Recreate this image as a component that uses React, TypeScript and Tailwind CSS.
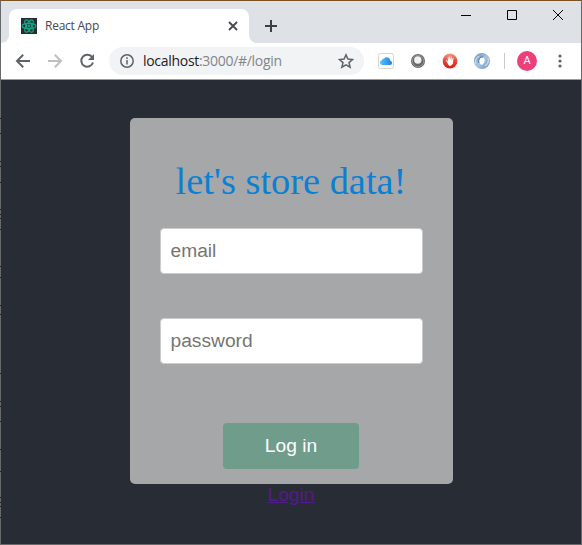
import type { ReactNode } from "react";

function TabStrip() {
  return (
    <header className="flex h-[42px] shrink-0 bg-[#dee1e6]">
      <div className="flex w-2 items-end bg-white">
        <div className="h-full w-2 rounded-br-lg bg-[#dee1e6]" />
      </div>
      <div className="mt-2 flex w-60 items-center rounded-t-lg bg-white pl-3 pr-[9px]">
        <svg className="h-4 w-4" viewBox="0 0 16 16" fill="none" stroke="#12a583" strokeWidth="1.2">
          <rect width="16" height="16" fill="#282c34" stroke="none" />
          <ellipse cx="8" cy="8" rx="6.8" ry="2.7" />
          <ellipse cx="8" cy="8" rx="6.8" ry="2.7" transform="rotate(60 8 8)" />
          <ellipse cx="8" cy="8" rx="6.8" ry="2.7" transform="rotate(120 8 8)" />
          <circle cx="8" cy="8" r="1.4" fill="#12a583" stroke="none" />
        </svg>
        <span className="ml-2 grow text-xs tracking-[-0.25px] text-[#45494d]">React App</span>
        <svg className="h-3.5 w-3.5" viewBox="0 0 14 14" stroke="#45494d" strokeWidth="1.8">
          <path d="M3 3l8 8M11 3l-8 8" />
        </svg>
      </div>
      <div className="w-2 bg-white">
        <div className="h-full w-2 rounded-bl-lg bg-[#dee1e6]" />
      </div>
      <svg className="ml-[7px] mt-[18px] h-3.5 w-3.5" viewBox="0 0 14 14" stroke="#3c4043" strokeWidth="2">
        <path d="M7 1v12M1 7h12" />
      </svg>
      <div className="ml-auto flex gap-9 pr-[18px] pt-[9px]">
        <svg className="h-2.5 w-2.5" viewBox="0 0 10 10" stroke="#000">
          <path d="M0 5.5h10" />
        </svg>
        <svg className="h-2.5 w-2.5" viewBox="0 0 10 10" fill="none" stroke="#000">
          <path d="M.5.5h9v9h-9z" />
        </svg>
        <svg className="h-2.5 w-2.5" viewBox="0 0 10 10" stroke="#000">
          <path d="M0 0l10 10M10 0L0 10" />
        </svg>
      </div>
    </header>
  );
}

function Toolbar() {
  return (
    <nav className="flex h-9 shrink-0 items-center bg-white pl-3.5">
      <svg className="h-4 w-4" viewBox="0 0 16 16" fill="none" stroke="#5f6368" strokeWidth="2">
        <path d="M15 8H2.5M8.2 1.7L2 8l6.2 6.3" />
      </svg>
      <svg className="ml-4 h-4 w-4" viewBox="0 0 16 16" fill="none" stroke="#bdbfc1" strokeWidth="2">
        <path d="M1 8h12.5M7.8 1.7L14 8l-6.2 6.3" />
      </svg>
      <svg className="ml-4 h-4 w-4" viewBox="0 0 16 16" fill="none" stroke="#5f6368" strokeWidth="2">
        <path d="M13.2 4.2A6 6 0 1 0 14 9.5" />
        <path d="M15 1v6H9z" fill="#5f6368" stroke="none" />
      </svg>
      <div className="ml-3.5 flex h-7 w-[255px] items-center rounded-full bg-[#f1f3f4] pl-2.5 pr-2.5">
        <svg className="h-4 w-4" viewBox="0 0 16 16" fill="none" stroke="#5f6368" strokeWidth="1.5">
          <circle cx="8" cy="8" r="6.2" />
          <path d="M8 7v4.5M8 4.3v1.7" />
        </svg>
        <span className="ml-2 grow text-sm tracking-[-0.3px] text-[#80868b]">
          <span className="text-[#202124]">localhost</span>:3000/#/login
        </span>
        <svg className="h-4 w-4" viewBox="0 0 16 16" fill="none" stroke="#5f6368" strokeWidth="1.5">
          <path d="M8 1.8l1.9 4.3 4.6.4-3.5 3.1 1.1 4.6L8 11.8l-4.1 2.4L5 9.6 1.5 6.5l4.6-.4z" />
        </svg>
      </div>
      <div className="ml-3.5 flex gap-4">
        <svg className="h-4 w-4" viewBox="0 0 16 16">
          <defs>
            <linearGradient id="cloud" x1="0" x2="1">
              <stop stopColor="#54c5fb" />
              <stop offset="1" stopColor="#247de8" />
            </linearGradient>
          </defs>
          <rect x=".5" y=".5" width="15" height="15" rx="2" fill="#fff" stroke="#d4d4d4" />
          <path d="M4 12a2.4 2.4 0 0 1-.2-4.7A2 2 0 0 1 6 5.7a3.6 3.6 0 0 1 6.4 2A2.2 2.2 0 0 1 12.2 12z" fill="url(#cloud)" />
        </svg>
        <svg className="h-4 w-4" viewBox="0 0 16 16">
          <circle cx="8" cy="8" r="7" fill="#686868" />
          <circle cx="8" cy="8" r="5.7" fill="none" stroke="#929292" />
          <circle cx="7.8" cy="7" r="3.7" fill="#f1f1f1" />
        </svg>
        <svg className="h-4 w-4" viewBox="0 0 16 16">
          <defs>
            <linearGradient id="stop" x1="0" x2="0" y1="0" y2="1">
              <stop stopColor="#ef9c8c" />
              <stop offset=".5" stopColor="#e64431" />
              <stop offset="1" stopColor="#dc1c10" />
            </linearGradient>
          </defs>
          <circle cx="8" cy="8" r="7.4" fill="url(#stop)" />
          <path d="M4 7l2 1.5V4l1 3 .5-4 1 4 1-3.5V8l1.700-3-.4 5.500L9 12.500H7z" fill="#fff" stroke="#fff" strokeWidth=".4" />
        </svg>
        <svg className="h-4 w-4" viewBox="0 0 16 16" fill="none">
          <defs>
            <linearGradient id="swirl" x1="0" x2="1" y1="0" y2="1">
              <stop stopColor="#5f8bb8" />
              <stop offset=".5" stopColor="#a9c3de" />
              <stop offset="1" stopColor="#6591bd" />
            </linearGradient>
          </defs>
          <path fillRule="evenodd" d="M8 0a8 8 0 1 0 0 16A8 8 0 0 0 8 0zM8.500 4.300c3 .5 3.300 6-.7 7.600-3.500-1-3.500-6.500.7-7.600z" fill="url(#swirl)" />
          <path d="M11 13c3-2 4-5 3-8M5 3C2 5 1 8 2 11" stroke="#c6d8ea" strokeWidth="1.300" />
          <path d="M9 4C6 3 3.500 7 5 10" stroke="#487aa9" strokeWidth="1" />
        </svg>
      </div>
      <div className="ml-3.5 h-4 w-px bg-[#c8cacd]" />
      <div className="ml-3 flex h-5 w-5 items-center justify-center rounded-full bg-[#ec407a] font-[Roboto] text-[11px] text-white">A</div>
      <svg className="ml-auto mr-[13px] h-4 w-4" viewBox="0 0 16 16" fill="#5f6368">
        <circle cx="8" cy="3" r="1.6" />
        <circle cx="8" cy="8" r="1.6" />
        <circle cx="8" cy="13" r="1.6" />
      </svg>
    </nav>
  );
}

function Field({ type, label }: { type: string; label: string }) {
  return (
    <input
      type={type}
      placeholder={label}
      className="block h-[46px] w-[263px] rounded-[4px] border border-[#ccc] bg-white px-2.5 text-[19.2px] placeholder:text-[#757575]"
    />
  );
}

function Page({ children }: { children: ReactNode }) {
  return (
    <main className="flex grow flex-col items-center bg-[#282c34] pt-[38px] font-['Liberation_Sans',Arial,sans-serif] text-[19.2px]">
      {children}
    </main>
  );
}

const edgeMarks = [118, 133, 161, 166, 182, 209, 214, 218, 229, 266, 277, 305, 314, 373, 401, 406, 421, 449, 471, 497, 502, 506, 517];

export default function App() {
  return (
    <div className="relative flex h-[545px] w-[582px] flex-col border border-[#68696b] border-t-[#7a5423] font-['Open_Sans','Noto_Sans',sans-serif]">
      <TabStrip />
      <Toolbar />
      <div className="h-px shrink-0 bg-[#9b9c9e]" />
      <Page>
        <form className="flex h-[366px] w-[323px] flex-col items-center rounded-[5px] bg-[#a6a7a9] pt-[41px]">
          <h1 className="h-[69px] font-['Liberation_Serif','Times_New_Roman',serif] text-[38.4px] leading-[45px] text-[#0b80d3]">
            let's store data!
          </h1>
          <Field type="text" label="email" />
          <div className="h-11" />
          <Field type="password" label="password" />
          <button type="button" className="mt-[59px] h-[46px] w-[136px] rounded-[4px] bg-[#709c8b] text-white">
            Log in
          </button>
        </form>
        <a href="#login" className="leading-[22px] text-[#551a8b] underline">
          Login
        </a>
      </Page>
      {edgeMarks.map((y) => (
        <i key={y} className="absolute -left-px h-px w-px bg-[#222]" style={{ top: y - 1 }} />
      ))}
    </div>
  );
}
